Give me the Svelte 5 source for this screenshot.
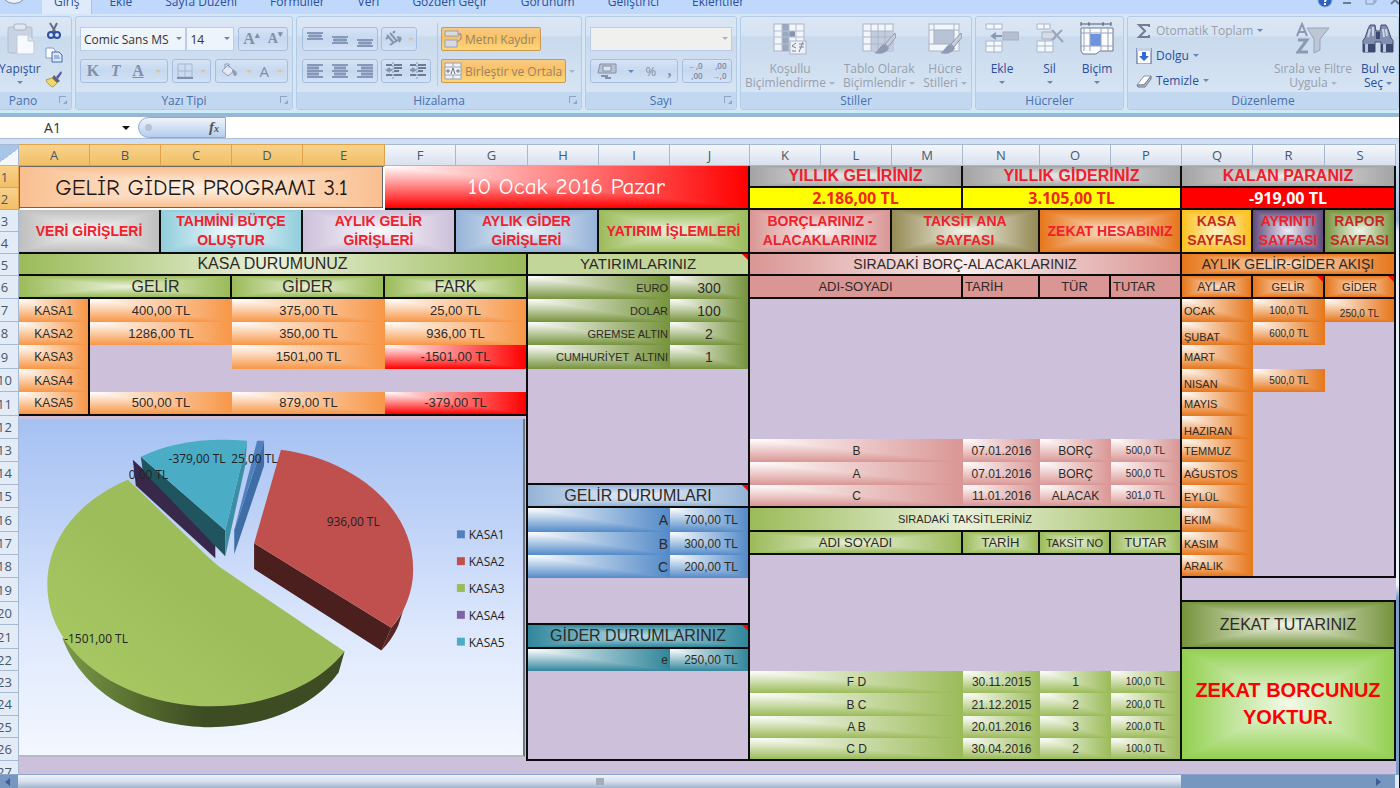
<script>
  const tabs = ['Giriş', 'Ekle', 'Sayfa Düzeni', 'Formüller', 'Veri', 'Gözden Geçir', 'Görünüm', 'Geliştirici', 'Eklentiler']

  const columns = [
    ['A', 71], ['B', 71], ['C', 71], ['D', 71], ['E', 82], ['F', 71], ['G', 72],
    ['H', 71], ['I', 71], ['J', 80], ['K', 71], ['L', 71], ['M', 71], ['N', 77],
    ['O', 71], ['P', 71], ['Q', 71], ['R', 72], ['S', 71]
  ]

  const c = (text, span, cls = '', rows = 1) => ({ text, span, cls, rows })
  const link = (text, span, cls) => ({ text, span, cls: 'menu center right bottom ' + cls, rows: 2, href: '#sayfa' })
  const month = (text, low) => c(text, 1, 'corner amber s11 left' + (low ? ' low' : ''))
  const kasa = (text) => c(text, 1, 'corner orange s12 right')
  const money = (text, span, color = 'orange') => c(text, span, 'corner s13 ' + color)
  const debt = (name, date, kind, sum, extra = '') => [
    c(name, 3, 'corner pink s12 ' + extra),
    c(date, 1, 'corner pink s12 ' + extra),
    c(kind, 1, 'corner pink s12 ' + extra),
    c(sum, 1, 'corner pink s10 right ' + extra)
  ]
  const instalment = (name, date, no, sum, extra = '') => [
    c(name, 3, 'corner green s12 ' + extra),
    c(date, 1, 'corner green s12 ' + extra),
    c(no, 1, 'corner green s12 ' + extra),
    c(sum, 1, 'corner green s10 right ' + extra)
  ]

  const rows = [
    { h: 22, cells: [
      c('GELİR GİDER PROGRAMI 3.1', 5, 'center peach comic selected', 2),
      c('10 Ocak 2016 Pazar', 5, 'corner red comic date right bottom', 2),
      c('YILLIK GELİRİNİZ', 3, 'center gray total right bottom'),
      c('YILLIK GİDERİNİZ', 3, 'center gray total right bottom'),
      c('KALAN PARANIZ', 3, 'center gray total right bottom')
    ] },
    { h: 22, cells: [
      c('2.186,00 TL', 3, 'yellow amount right bottom'),
      c('3.105,00 TL', 3, 'yellow amount right bottom'),
      c('-919,00 TL', 3, 'negative amount right bottom')
    ] },
    { h: 22, cells: [
      link('VERİ GİRİŞLERİ', 2, 'silver'),
      link('TAHMİNİ BÜTÇE OLUŞTUR', 2, 'aqua'),
      link('AYLIK GELİR GİRİŞLERİ', 2, 'lilac'),
      link('AYLIK GİDER GİRİŞLERİ', 2, 'sky'),
      link('YATIRIM İŞLEMLERİ', 2, 'green'),
      link('BORÇLARINIZ - ALACAKLARINIZ', 2, 'pink'),
      link('TAKSİT ANA SAYFASI', 2, 'khaki'),
      link('ZEKAT HESABINIZ', 2, 'amber'),
      link('KASA SAYFASI', 1, 'gold deep'),
      link('AYRINTI SAYFASI', 1, 'violet'),
      link('RAPOR SAYFASI', 1, 'olive deep')
    ] },
    { h: 22, cells: [] },
    { h: 22, cells: [
      c('KASA DURUMUNUZ', 7, 'band green s16 right bottom'),
      c('YATIRIMLARINIZ', 3, 'palegreen s15 right bottom note'),
      c('SIRADAKİ BORÇ-ALACAKLARINIZ', 6, 'band pink s14 right bottom'),
      c('AYLIK GELİR-GİDER AKIŞI', 3, 'center amber s14 right bottom')
    ] },
    { h: 23, cells: [
      c('GELİR', 3, 'center green s16 indent right bottom'),
      c('GİDER', 2, 'center green s16 right bottom'),
      c('FARK', 2, 'center green s16 right bottom'),
      c('EURO', 2, 'corner olive s11 end'),
      c('300', 1, 'corner olive s14 right'),
      c('ADI-SOYADI', 3, 'flatpink s13 right bottom'),
      c('TARİH', 1, 'flatpink s13 left right bottom'),
      c('TÜR', 1, 'flatpink s13 right bottom'),
      c('TUTAR', 1, 'flatpink s13 left right bottom'),
      c('AYLAR', 1, 'center amber s12 right bottom'),
      c('GELİR', 1, 'center amber s11 right bottom note'),
      c('GİDER', 1, 'center amber s11 right bottom note')
    ] },
    { h: 23, cells: [
      kasa('KASA1'), money('400,00 TL', 2), money('375,00 TL', 2), money('25,00 TL', 2, 'orange right'),
      c('DOLAR', 2, 'corner olive s11 end'), c('100', 1, 'corner olive s14 right'),
      c('', 6, 'right', 6),
      month('OCAK'), c('100,0 TL', 1, 'corner amber s10'), c('250,0 TL', 1, 'corner amber s10 right low')
    ] },
    { h: 23, cells: [
      kasa('KASA2'), money('1286,00 TL', 2), money('350,00 TL', 2), money('936,00 TL', 2, 'orange right'),
      c('GREMSE ALTIN', 2, 'corner olive s11 end'), c('2', 1, 'corner olive s14 right'),
      month('ŞUBAT', true), c('600,0 TL', 1, 'corner amber s10'), c('', 1, 'right')
    ] },
    { h: 24, cells: [
      kasa('KASA3'), c('', 2), money('1501,00 TL', 2), money('-1501,00 TL', 2, 'red right'),
      c('CUMHURİYET  ALTINI', 2, 'corner olive s11 end'), c('1', 1, 'corner olive s14 right'),
      month('MART'), c('', 1), c('', 1, 'right')
    ] },
    { h: 23, cells: [
      kasa('KASA4'), c('', 6, 'right'), c('', 3, 'right bottom', 5),
      month('NISAN', true), c('500,0 TL', 1, 'corner amber s10'), c('', 1, 'right')
    ] },
    { h: 24, cells: [
      c('KASA5', 1, 'corner orange s12 right bottom'), money('500,00 TL', 2, 'orange bottom'),
      money('879,00 TL', 2, 'orange bottom'), money('-379,00 TL', 2, 'red right bottom'),
      month('MAYIS'), c('', 2, 'right bottom', 8)
    ] },
    { h: 23, cells: [{ ...c('', 7, 'chartcell right', 15), chart: true }, month('HAZIRAN', true)] },
    { h: 23, cells: [...debt('B', '07.01.2016', 'BORÇ', '500,0 TL'), month('TEMMUZ')] },
    { h: 23, cells: [...debt('A', '07.01.2016', 'BORÇ', '500,0 TL'), month('AĞUSTOS')] },
    { h: 23, cells: [
      c('GELİR DURUMLARI', 3, 'center sky s16 right bottom note'),
      ...debt('C', '11.01.2016', 'ALACAK', '301,0 TL', 'bottom'), month('EYLÜL')
    ] },
    { h: 24, cells: [
      c('A', 2, 'corner blue s14 end'), c('700,00 TL', 1, 'corner blue s12 end inset right'),
      c('SIRADAKİ TAKSİTLERİNİZ', 6, 'band green s11 right bottom'), month('EKIM')
    ] },
    { h: 23, cells: [
      c('B', 2, 'corner blue s14 end'), c('300,00 TL', 1, 'corner blue s12 end inset right'),
      c('ADI SOYADI', 3, 'center green s13 right bottom'), c('TARİH', 1, 'center green s13 right bottom'),
      c('TAKSİT NO', 1, 'center green s11 right bottom'), c('TUTAR', 1, 'center green s13 right bottom'),
      month('KASIM')
    ] },
    { h: 23, cells: [
      c('C', 2, 'corner blue s14 end'), c('200,00 TL', 1, 'corner blue s12 end inset right'),
      c('', 6, 'right', 5), c('ARALIK', 1, 'corner amber s11 left bottom')
    ] },
    { h: 24, cells: [c('', 3, 'right bottom', 2), c('', 3, 'bottom')] },
    { h: 23, cells: [c('ZEKAT TUTARINIZ', 3, 'center olive s16 right bottom', 2)] },
    { h: 24, cells: [c('GİDER DURUMLARINIZ', 3, 'center teal s16 right bottom note')] },
    { h: 22, cells: [
      c('e', 2, 'corner teal s12 end'), c('250,00 TL', 1, 'corner teal s12 end inset right'),
      c('ZEKAT BORCUNUZ YOKTUR.', 3, 'center lime zekat right bottom', 5)
    ] },
    { h: 22, cells: [c('', 3, 'right bottom', 4), ...instalment('F D', '30.11.2015', '1', '100,0 TL')] },
    { h: 23, cells: instalment('B C', '21.12.2015', '2', '200,0 TL') },
    { h: 22, cells: instalment('A B', '20.01.2016', '3', '200,0 TL') },
    { h: 23, cells: instalment('C D', '30.04.2016', '2', '100,0 TL', 'bottom') },
    { h: 23, cells: [c('', 19)] }
  ]

  const legend = [
    ['KASA1', '#4f81bd'], ['KASA2', '#c0504d'], ['KASA3', '#9bbb59'], ['KASA4', '#8064a2'], ['KASA5', '#4bacc6']
  ]
</script>

{#snippet lines(widths, top, anchor)}
  <svg width="18" height="18" viewBox="0 0 18 18">
    <rect x={anchor === 'end' ? 5 : anchor === 'mid' ? 3 : 1} y={top} width="12" height={widths.length * 3 - 1} fill="#a9b9d2" />
    {#each widths as w, i}
      <rect x={anchor === 'end' ? 17 - w : anchor === 'mid' ? 9 - w / 2 : 1} y={top + i * 3} width={w} height="2" fill="#8598ba" />
    {/each}
  </svg>
{/snippet}

{#snippet gridIcon(kind)}
  <svg width="34" height="34" viewBox="0 0 34 34">
    <rect x="1" y="2" width="30" height="27" fill="#f2f5fa" stroke="#aab6c9" />
    {#if kind === 'style'}
      <rect x="6" y="8" width="20" height="14" fill="#b9c3d6" stroke="#a3afc4" />
      <path d="M1 8H6M1 22H6M6 2V8M26 2V8M26 8H31" stroke="#aab6c9" />
    {:else if kind === 'cond'}
      <rect x="9" y="2" width="7" height="27" fill="#9aa7bf" />
      <rect x="16" y="9" width="6" height="6" fill="#8794ae" />
      <path d="M1 9H31M1 15H31M1 22H31M9 2V29M16 2V29M23 2V29" stroke="#b3bed0" />
      <rect x="17" y="19" width="16" height="13" fill="#eef1f6" stroke="#a9b3c5" />
      <path d="M23 21L19 24L23 26M19 29H23M26 22H31M26 25H31M30 20L26 30" stroke="#78849b" fill="none" />
    {:else}
      <rect x="9" y="9" width="22" height="20" fill="#c3ccdc" />
      <path d="M1 9H31M1 15H31M1 22H31M9 2V29M16 2V29M23 2V29" stroke="#aab6c9" />
    {/if}
    {#if kind !== 'cond'}
      <path d="M33 11L23 22L26 25L34 15Z" fill="#c6cedb" stroke="#8f9bb0" />
      <path d="M22 22L27 26C25 31 18 33 12 31C17 29 17 24 22 22Z" fill="#8f9bb3" />
    {/if}
  </svg>
{/snippet}

<div class="app">
  <nav class="tabs">
    <span class="office"></span>
    {#each tabs as tab, i}
      <a href="#sekme" class:active={i === 0}>{tab}</a>
    {/each}
    <span class="window">
      <svg width="16" height="16" viewBox="0 0 16 16"><circle cx="8" cy="8" r="7" fill="#2f62c0" stroke="#8aa6d8" /><path d="M6 6C6 3 10 3 10 6C10 8 8 7 8 10M8 11V13" stroke="#fff" stroke-width="2" fill="none" /></svg>
      <svg width="60" height="16" viewBox="0 0 60 16"><path d="M4 11H12" stroke="#6c7c93" stroke-width="2" /><path d="M29 6V4H37V10H35M27 6H35V12H27Z" stroke="#8a97aa" fill="none" /><path d="M52 4L60 12M60 4L52 12" stroke="#6c7c93" stroke-width="2" /></svg>
    </span>
  </nav>

  <div class="ribbon">
    <section class="group pano">
      <div class="tools">
        <button class="big">
          <svg width="34" height="34" viewBox="0 0 34 34"><rect x="5" y="5" width="24" height="26" rx="2" fill="#c9d3e2" stroke="#b0bccf" /><rect x="11" y="2" width="12" height="6" rx="2" fill="#e2e8f1" stroke="#a9b4c6" /><path d="M14 13H25L31 19V32H14Z" fill="#f6f9fd" stroke="#c0cad9" /><path d="M25 13V19H31" fill="#dce4ef" stroke="#c0cad9" /></svg>
          <span>Yapıştır</span><i></i>
        </button>
        <div class="stack">
          <button aria-label="Kes"><svg width="18" height="18" viewBox="0 0 18 18"><path d="M5 1L11 11M12 1L7 11" stroke="#5f6f86" stroke-width="2" /><circle cx="6" cy="13" r="3" fill="none" stroke="#2d50a0" stroke-width="2" /><circle cx="12" cy="13" r="3" fill="none" stroke="#2d50a0" stroke-width="2" /></svg></button>
          <button aria-label="Kopyala"><svg width="18" height="18" viewBox="0 0 18 18"><path d="M1 2H8L10 4V12H1Z" fill="#fff" stroke="#7f9acb" /><path d="M7 6H14L17 9V16H7Z" fill="#dbe7fa" stroke="#4669ad" /><path d="M9 10H14M9 12H15" stroke="#5f83c7" /></svg></button>
          <button aria-label="Biçim Boyacısı"><svg width="18" height="18" viewBox="0 0 18 18"><path d="M16 1L11 7L13 9L17 3Z" fill="#5b5f9d" /><path d="M9 5L15 11L12 13L7 8Z" fill="#59618e" /><path d="M7 8L12 13L8 17C5 16 2 13 1 10Z" fill="#f1d767" stroke="#b79a3c" /></svg></button>
        </div>
      </div>
      <h2>Pano<b></b></h2>
    </section>

    <section class="group font">
      <div class="tools col">
        <div class="line">
          <span class="combo name"><select aria-label="Yazı tipi"><option>Comic Sans MS</option></select></span>
          <span class="combo size"><select aria-label="Yazı boyutu"><option>14</option></select></span>
          <span class="set w50"><button class="serif a1">A<sup>▴</sup></button><button class="serif a2">A<sup>▾</sup></button></span>
        </div>
        <div class="line">
          <span class="set w90"><button class="serif bold">K</button><button class="serif italic">T</button><button class="serif under">A</button><i></i></span>
          <span class="set w40"><button aria-label="Kenarlık"><svg width="16" height="16" viewBox="0 0 16 16"><path d="M1 1H15V14H1ZM8 1V14M1 8H15" stroke="#a9b6cb" fill="none" /><path d="M0 15H16" stroke="#7f90ac" stroke-width="2" /></svg></button><i></i></span>
          <span class="set w74"><button aria-label="Dolgu rengi"><svg width="18" height="18" viewBox="0 0 18 18"><path d="M8 3L14 9L8 14L2 9Z" fill="#e4e9f1" stroke="#8f9db5" /><path d="M5 6V2H9V6" fill="none" stroke="#8f9db5" /><path d="M14 8C17 10 17 13 15 14C13 13 14 10 12 9Z" fill="#8f9db5" stroke="#8f9db5" /></svg></button><i></i><button class="plain">A</button><i></i></span>
        </div>
      </div>
      <h2>Yazı Tipi<b></b></h2>
    </section>

    <section class="group align">
      <div class="tools">
        <div class="col">
          <div class="line">
            <span class="set w75">
              <button aria-label="Üste hizala">{@render lines([16, 14, 16], 2, 'mid')}</button>
              <button aria-label="Ortala">{@render lines([16, 14, 16], 6, 'mid')}</button>
              <button aria-label="Alta hizala">{@render lines([16, 14, 16], 9, 'mid')}</button>
            </span>
            <span class="set w36"><button aria-label="Yönlendirme"><svg width="18" height="18" viewBox="0 0 18 18"><path d="M2 5L8 12M5 3L11 10M1 9L4 6M8 3L10 1M5 15L16 8M16 8L12 7M16 8L14 12" stroke="#8795ad" stroke-width="2" fill="none" /></svg></button><i></i></span>
          </div>
          <div class="line">
            <span class="set w75">
              <button aria-label="Sola hizala">{@render lines([16, 12, 16, 12, 16], 2, 'start')}</button>
              <button aria-label="Yatay ortala">{@render lines([16, 12, 16, 12, 16], 2, 'mid')}</button>
              <button aria-label="Sağa hizala">{@render lines([16, 12, 16, 12, 16], 2, 'end')}</button>
            </span>
            <span class="set w50">
              <button aria-label="Girintiyi azalt"><svg width="18" height="18" viewBox="0 0 18 18"><path d="M1 3H7M9 3H17M9 6H17M9 9H14M1 13H7M9 13H17" stroke="#6d7b97" stroke-width="2" /><path d="M8 0V18" stroke="#8795ad" stroke-dasharray="2 1" /><path d="M5 6L2 8L5 10M2 8H7" stroke="#8795ad" fill="none" stroke-width="2" /></svg></button>
              <button aria-label="Girintiyi artır"><svg width="18" height="18" viewBox="0 0 18 18"><path d="M1 3H7M9 3H17M9 6H17M9 9H14M1 13H7M9 13H17" stroke="#6d7b97" stroke-width="2" /><path d="M8 0V18" stroke="#8795ad" stroke-dasharray="2 1" /><path d="M3 6L6 8L3 10M1 8H6" stroke="#8795ad" fill="none" stroke-width="2" /></svg></button>
            </span>
          </div>
        </div>
        <div class="col split">
          <button class="hot wrap"><svg width="18" height="18" viewBox="0 0 18 18"><rect x="1" y="1" width="13" height="5" fill="#d6dae2" stroke="#98a2b3" /><rect x="1" y="10" width="12" height="7" fill="#d6dae2" stroke="#98a2b3" /><path d="M14 4H17V9L13 12" fill="none" stroke="#7b89a3" /></svg>Metni Kaydır</button>
          <div class="line"><button class="hot merge"><svg width="18" height="18" viewBox="0 0 18 18"><rect x="1" y="1" width="16" height="16" fill="#f0f2f6" stroke="#98a2b3" /><path d="M1 5H17M1 13H17M9 1V5M9 13V17" stroke="#98a2b3" /><path d="M2 9H6M12 9H16M4 7V11M14 7V11M7 12L9 6L11 12" stroke="#67758f" fill="none" /></svg>Birleştir ve Ortala</button><i></i></div>
        </div>
      </div>
      <h2>Hizalama<b></b></h2>
    </section>

    <section class="group number">
      <div class="tools col">
        <span class="combo format"><select aria-label="Sayı biçimi"><option></option></select></span>
        <div class="line">
          <span class="set w90"><button aria-label="Para birimi"><svg width="20" height="18" viewBox="0 0 20 18"><path d="M3 2H19V11H1Z" fill="#b8c2d2" stroke="#8492a9" /><rect x="6" y="4" width="8" height="5" fill="#dde3ec" stroke="#8492a9" /><path d="M4 14H11M8 16H14" stroke="#8492a9" stroke-width="2" /></svg></button><i class="dark"></i><button class="plain pct">%</button><button class="serif bold">,</button></span>
          <span class="set w50 decimals"><button>←,0<br />,00</button><button>,00<br />→,0</button></span>
        </div>
      </div>
      <h2>Sayı<b></b></h2>
    </section>

    <section class="group styles">
      <div class="tools">
        <button class="big off">{@render gridIcon('cond')}<span>Koşullu</span><span>Biçimlendirme <i></i></span></button>
        <button class="big off">{@render gridIcon('table')}<span>Tablo Olarak</span><span>Biçimlendir <i></i></span></button>
        <button class="big off">{@render gridIcon('style')}<span>Hücre</span><span>Stilleri <i></i></span></button>
      </div>
      <h2>Stiller</h2>
    </section>

    <section class="group cells">
      <div class="tools">
        <button class="big"><svg width="34" height="34" viewBox="0 0 34 34"><path d="M1 2H17V7H1ZM9 2V7M1 19H17V30H1ZM9 19V30M1 24H17" fill="#f5f8fc" stroke="#aab6c9" /><rect x="18" y="10" width="16" height="8" fill="#b5bfd0" stroke="#a3afc2" /><path d="M17 14H7M11 11L7 14L11 17" stroke="#8797b3" stroke-width="2" fill="none" /></svg><span>Ekle</span><i></i></button>
        <button class="big"><svg width="34" height="34" viewBox="0 0 34 34"><path d="M4 2H17V7H4ZM11 2V7M4 19H20V30H4ZM12 19V30M4 24H20" fill="#f5f8fc" stroke="#aab6c9" /><path d="M9 10H22V17H9Z" fill="#d5dce7" stroke="#a3afc2" /><path d="M19 8L30 20M29 8L19 18" stroke="#9aa6ba" stroke-width="2" /></svg><span>Sil</span><i></i></button>
        <button class="big"><svg width="34" height="34" viewBox="0 0 34 34"><path d="M1 2H31M1 0V4M9 0V4M23 0V4M31 0V4" stroke="#4d596e" /><path d="M1 6H33V29H20L16 32H3L1 29Z" fill="#fbfcfe" stroke="#6d7a90" /><rect x="10" y="12" width="11" height="12" fill="#6f94df" /><path d="M1 11H33M1 24H33M10 6V29M21 6V29M28 6V29M4 6V29" stroke="#98a4b8" /></svg><span>Biçim</span><i></i></button>
      </div>
      <h2>Hücreler</h2>
    </section>

    <section class="group edit">
      <div class="tools">
        <div class="stack wide">
          <button class="off"><svg width="16" height="16" viewBox="0 0 16 16"><path d="M13 4V2H3L9 8L3 14H13V12" stroke="#6f7d95" stroke-width="2" fill="none" /></svg>Otomatik Toplam <i class="dark"></i></button>
          <button><svg width="16" height="16" viewBox="0 0 16 16"><rect x="1" y="0" width="14" height="16" fill="#fff" stroke="#4a5f8f" /><rect x="1" y="0" width="14" height="3" fill="#c5d2ea" /><path d="M6 4H10V8H13L8 13L3 8H6Z" fill="#3568d4" /></svg>Dolgu <i class="dark"></i></button>
          <button><svg width="16" height="16" viewBox="0 0 16 16"><path d="M8 3H15L8 12H1Z" fill="#fdfdfe" stroke="#8a94a6" /><path d="M1 12H8L15 3V6L9 14H2Z" fill="#b9c2d2" stroke="#6e7a90" /></svg>Temizle <i class="dark"></i></button>
        </div>
        <button class="big off"><svg width="34" height="34" viewBox="0 0 34 34"><path d="M1 14L6 2L11 14M3 10H9" stroke="#8b99b2" stroke-width="2" fill="none" /><path d="M2 18H11L2 30H12" stroke="#8b99b2" stroke-width="3" fill="none" /><path d="M11 6H33L24 17V28L18 31V17Z" fill="#bcc6d5" stroke="#98a5ba" /></svg><span>Sırala ve Filtre</span><span>Uygula <i></i></span></button>
        <button class="big"><svg width="34" height="34" viewBox="0 0 34 34"><path d="M9 3H14L15 9H19L20 3H25L27 7L30 16Q33 18 32 22V30H20V20H14V30H2V22Q1 18 4 16L7 7Z" fill="#8190b0" stroke="#45526f" /><path d="M2 22H14V30H2ZM20 22H32V30H20Z" fill="#3c4a72" /><path d="M4 22H7V30H4ZM22 22H25V30H22Z" fill="#b9c5de" /><path d="M9 7L7 15M22 7L23 15M12 5V14M25 7L26 14" stroke="#cdd6e7" stroke-width="2" /><path d="M15 10H19V17H15Z" fill="#3c4a72" /></svg><span>Bul ve</span><span>Seç <i class="dark"></i></span></button>
      </div>
      <h2>Düzenleme</h2>
    </section>
  </div>

  <div class="formula">
    <input class="namebox" aria-label="Ad kutusu" value="A1" />
    <i class="drop"></i>
    <div class="fx"><span></span><button aria-label="İşlev ekle"><em>f</em><small>x</small></button></div>
    <input class="entry" aria-label="Formül çubuğu" />
  </div>

  <div class="work">
    <div class="sheet">
      <table>
        <colgroup>
          <col class="rowcol" />
          {#each columns as [name, width] (name)}
            <col style:width="{width}px" />
          {/each}
        </colgroup>
        <thead>
          <tr>
            <th class="corner-all"></th>
            {#each columns as [name], i (name)}
              <th class:hot-head={i < 5}>{name}</th>
            {/each}
          </tr>
        </thead>
        <tbody>
          {#each rows as row, r}
            <tr style:height="{row.h}px">
              <th class:hot-head={r < 2}>{r + 1}</th>
              {#each row.cells as cell}
                <td class={cell.cls} colspan={cell.span} rowspan={cell.rows}>
                  {#if cell.chart}
                    <div class="chart">
                      <svg viewBox="0 0 506 338" role="img" aria-label="Kasa farkları">
                        <defs>
                          <linearGradient id="side" x1="0" x2="1">
                            <stop offset="0" stop-color="#7d9a49" />
                            <stop offset="0.3" stop-color="#52682c" />
                            <stop offset="0.5" stop-color="#3e4c24" />
                          </linearGradient>
                          <linearGradient id="top" x1="0" y1="1" x2="1" y2="0">
                            <stop offset="0" stop-color="#abcb66" />
                            <stop offset="0.5" stop-color="#9dbd5b" />
                          </linearGradient>
                        </defs>
                        <path d="M114 41L197 117V140L117 67Z" fill="#38294a" />
                        <path d="M122 38L207 112V138L124 52Z" fill="#20545f" />
                        <path d="M229 22L207 112V138L227 47Z" fill="#3a8fa5" />
                        <path d="M122 38C150 24 188 18 229 22L207 112Z" fill="#4bacc6" />
                        <path d="M246 22V47L216 136V112Z" fill="#3f6da6" />
                        <path d="M239 22H246L216 112Z" fill="#4f81bd" />
                        <path d="M236 125L374 210L364 233L236 151Z" fill="#4a1f1e" />
                        <path d="M374 210C380 203 384 197 387 189L381 208C377 217 371 226 364 233Z" fill="#5b2524" />
                        <path d="M263 31C334 40 397 88 396 152C396 175 387 195 374 210L236 125Z" fill="#c0504d" />
                        <path d="M43 220C65 280 130 310 192 310C245 310 296 290 321 255L327 234L192 270Z" fill="url(#side)" />
                        <path d="M109 61C60 82 28 120 28 167C28 240 110 289 192 289C250 289 300 268 327 234L200 148L190 139Z" fill="url(#top)" />
                        <text x="150" y="44">-379,00 TL</text>
                        <text x="213" y="44">25,00 TL</text>
                        <text x="110" y="60">0,00 TL</text>
                        <text x="309" y="108">936,00 TL</text>
                        <text x="45" y="225">-1501,00 TL</text>
                        {#each legend as [name, color], i}
                          <rect x="440" y={112 + i * 27} width="8" height="8" fill={color} />
                          <text x="452" y={121 + i * 27}>{name}</text>
                        {/each}
                      </svg>
                    </div>
                  {:else if cell.href}
                    <a href={cell.href}>{cell.text}</a>
                  {:else}
                    {cell.text}
                  {/if}
                </td>
              {/each}
            </tr>
          {/each}
        </tbody>
      </table>
    </div>
    <div class="vscroll"></div>
  </div>

  <div class="hscroll">
    <span class="arrow back"></span>
    <span class="thumb"><b></b></span>
    <span class="track"><span class="arrow next"></span></span>
  </div>
</div>

<style>
  :global(body) {
    margin: 0;
    overflow: hidden;
  }

  .app {
    display: flex;
    flex-direction: column;
    height: 100vh;
    box-sizing: border-box;
    overflow: hidden;
    background: #d0e0f4;
    border-right: 1px solid #111;
    font-family: 'Open Sans', 'Segoe UI', sans-serif;
    font-size: 12px;
    color: #2b4f9c;
  }

  button {
    padding: 0;
    border: 0;
    background: none;
    font: inherit;
    color: inherit;
  }

  svg {
    display: block;
    flex: none;
  }

  i {
    display: inline-block;
    flex: none;
    border: 3px solid transparent;
    border-top-color: #a9b3c2;
    border-bottom: 0;
    vertical-align: middle;
  }

  /* tabs */
  .tabs {
    display: flex;
    align-items: flex-end;
    gap: 1px;
    height: 14px;
    flex: none;
    overflow: hidden;
    background: #bfd8fb;
    line-height: 18px;
  }

  .office {
    width: 28px;
    height: 40px;
    margin-right: 13px;
    margin-bottom: 10px;
    border-radius: 0 0 18px 18px;
    background: #eef3fa;
    border: 1px solid #7f93b3;
    box-sizing: border-box;
  }

  .tabs a {
    padding: 0 16px 3px;
    color: #2b4f9c;
    text-decoration: none;
    white-space: nowrap;
  }

  .tabs .active {
    padding: 0 12px 3px;
    background: #dfeafa;
    border-right: 1px solid #a9c4e8;
  }

  .window {
    display: flex;
    gap: 6px;
    margin-left: auto;
    padding-bottom: 6px;
  }

  /* ribbon */
  .ribbon {
    display: flex;
    gap: 3px;
    flex: none;
    height: 99px;
    box-sizing: border-box;
    margin-left: -12px;
    padding: 2px 0 2px;
    background: #d5e7f7;
    border-bottom: 1px solid #c3effa;
  }

  .group {
    display: flex;
    flex-direction: column;
    flex: none;
    box-sizing: border-box;
    border: 1px solid #b4cbe6;
    border-radius: 3px;
    background: linear-gradient(#dbe6f4, #d6e3f2 20%, #c9daed 22%, #dae7f5);
  }

  .group h2 {
    position: relative;
    margin: 0;
    height: 17px;
    font-size: 12px;
    font-weight: 400;
    line-height: 17px;
    text-align: center;
    color: #4a70ae;
    background: #c1d8f0;
  }

  .group h2 b {
    position: absolute;
    right: 5px;
    top: 4px;
    width: 6px;
    height: 6px;
    border-left: 1px solid #8ea6c6;
    border-top: 1px solid #8ea6c6;
  }

  .group h2 b::after {
    content: '';
    position: absolute;
    right: -1px;
    bottom: -1px;
    border: 2px solid #8ea6c6;
    border-left-color: transparent;
    border-top-color: transparent;
  }

  .tools {
    display: flex;
    flex: 1;
    min-height: 0;
    padding: 0 4px;
  }

  .pano { width: 84px; }
  .font { width: 218px; }
  .align { width: 286px; }
  .number { width: 152px; }
  .styles { width: 232px; }
  .cells { width: 149px; }
  .edit { flex: 1; min-width: 240px; }

  .pano h2 { padding-right: 14px; }

  .col {
    display: flex;
    flex-direction: column;
    gap: 8px;
    padding-top: 10px;
  }

  .line {
    display: flex;
    align-items: center;
    gap: 4px;
  }

  .align .tools { padding-left: 5px; }
  .align .line { gap: 3px; }

  .split {
    margin: 6px 0 6px 6px;
    padding-top: 4px;
    padding-left: 3px;
    border-left: 1px solid #b4c8e0;
    align-items: flex-start;
  }

  .set {
    display: flex;
    align-items: center;
    justify-content: space-around;
    height: 24px;
    box-sizing: border-box;
    border: 1px solid #a5bfe0;
    border-radius: 3px;
    background: linear-gradient(#d6e3f4, #c6d9f0 50%, #d3e1f3);
  }

  .set i { border-top-color: #d3c6a6; }
  i.dark, .set i.dark { border-top-color: #6a86b3; }

  .w36 { width: 36px; }
  .w40 { width: 39px; }
  .w50 { width: 50px; }
  .w74 { width: 74px; }
  .w75 { width: 76px; }
  .w90 { width: 89px; }

  .serif {
    font-family: 'Liberation Serif', serif;
    font-size: 16px;
    font-weight: 700;
    line-height: 20px;
    color: #8190a8;
  }

  .serif sup {
    font-size: 9px;
    line-height: 8px;
  }

  .a2 { font-size: 14px; }
  .italic { font-style: italic; }
  .under { text-decoration: underline; }
  .plain { font-size: 15px; color: #8190a8; }
  .pct { font-size: 13px; }

  .decimals button {
    font-size: 8px;
    font-weight: 600;
    line-height: 10px;
    color: #7787a2;
    text-align: right;
  }

  .combo {
    position: relative;
    display: flex;
    height: 24px;
  }

  .combo::after {
    content: '';
    position: absolute;
    right: 4px;
    top: 10px;
    border: 3px solid transparent;
    border-top-color: #6a86b3;
    border-bottom: 0;
  }

  .combo select {
    appearance: none;
    width: 100%;
    height: 24px;
    margin: 0;
    padding: 0 3px;
    border: 1px solid #b9cde8;
    border-radius: 0;
    background: #eef4fc;
    font: inherit;
    color: #333;
  }

  .name { width: 107px; }
  .size { width: 48px; margin-left: -4px; }
  .format { width: 142px; }
  .format select { background: #f0f0ee; }
  .format::after { border-top-color: #a9b3c2; }

  .hot {
    display: flex;
    align-items: center;
    gap: 3px;
    height: 24px;
    box-sizing: border-box;
    padding: 0 2px;
    border: 1px solid #c79a52;
    border-radius: 2px;
    background: linear-gradient(#f7cb85, #fbc065 45%, #fdd777);
    color: #958569;
    white-space: nowrap;
  }

  .wrap { width: 100px; }
  .merge { width: 125px; }

  .big {
    display: flex;
    flex-direction: column;
    align-items: center;
    padding-top: 5px;
    line-height: 14px;
    white-space: nowrap;
  }

  .big > span:first-of-type { margin-top: 6px; }
  .big > i { margin-top: 5px; border-top-color: #6a86b3; }
  .off { color: #98a0ab; }

  .pano .tools { gap: 4px; padding-left: 10px; }

  .stack {
    display: flex;
    flex-direction: column;
    gap: 6px;
    padding-top: 5px;
  }

  .stack.wide { gap: 8px; }

  .wide button {
    display: flex;
    align-items: center;
    gap: 4px;
    height: 17px;
    white-space: nowrap;
  }

  .styles .tools { justify-content: space-between; }
  .cells .tools { justify-content: space-between; padding: 0 9px; }
  .edit .tools { justify-content: space-between; padding-left: 8px; padding-right: 3px; }
  .edit .stack { margin-right: auto; }
  .edit .big:last-child { margin-left: 9px; }

  /* formula bar */
  .formula {
    display: flex;
    align-items: center;
    flex: none;
    height: 21px;
    padding-right: 4px;
    border-top: 4px solid #9bb5d3;
    border-bottom: 1px solid #a9bed8;
    margin-bottom: 5px;
    background: #fff;
  }

  .formula input {
    height: 20px;
    padding: 0;
    border: 0;
    outline: 0;
    background: #fff;
    font: inherit;
    font-size: 14px;
    color: #333;
  }

  .namebox { width: 105px; text-align: center; }
  .formula .drop { margin: 0 8px 0 17px; border-width: 4px 4px 0; border-top-color: #111; }

  .fx {
    display: flex;
    justify-content: space-between;
    align-items: center;
    width: 88px;
    height: 21px;
    box-sizing: border-box;
    padding: 0 6px;
    border: 1px solid #8fa9cd;
    border-radius: 11px 0 0 11px;
    background: linear-gradient(#eef4fc, #b5cdec);
  }

  .fx span { width: 7px; height: 7px; border-radius: 4px; background: #b9c2d0; }
  .fx button { font-family: 'Liberation Serif', serif; font-size: 15px; font-weight: 700; line-height: 16px; color: #555; }
  .fx small { font-size: 10px; font-style: italic; }
  .entry { flex: 1; }

  /* sheet */
  .work {
    display: flex;
    flex: 1;
    min-height: 0;
  }

  .sheet {
    flex: 1;
    overflow: hidden;
    background: #ccc0da;
  }

  .vscroll {
    width: 3px;
    background: linear-gradient(#dfe9f6, #9fb9dc 12%, #e6eef9 14%, #eef3fa 70%, #7f9fca 72%);
  }

  table {
    width: calc(100% + 9px);
    margin-left: -9px;
    table-layout: fixed;
    border-collapse: separate;
    border-spacing: 0;
  }

  .rowcol { width: 28px; }
  thead tr { height: 22px; }

  th {
    padding: 0;
    box-sizing: border-box;
    border-right: 1px solid #a5b9d3;
    border-bottom: 1px solid #a5b9d3;
    background: #e3ebf6;
    font-size: 13px;
    font-weight: 400;
    line-height: 18px;
    color: #47586b;
  }

  thead th {
    border-top: 1px solid #a5b9d3;
    background: linear-gradient(#f4f7fc, #d9e1ee);
  }

  .hot-head, thead .hot-head {
    background: linear-gradient(#f8d28c, #f1bf66);
    border-color: #e2a24a;
  }

  thead .corner-all {
    background: linear-gradient(to bottom right, transparent 60%, #f4f7fc 60%), #a9c4e9;
  }

  td {
    position: relative;
    padding: 0;
    box-sizing: border-box;
    overflow: hidden;
    background-color: #ccc0da;
    font-family: 'Liberation Sans', Arial, sans-serif;
    font-size: 13px;
    line-height: 18px;
    text-align: center;
    white-space: pre;
    color: #2d2a28;
  }

  td.right { border-right: 2px solid #0c0c0c; }
  td.bottom { border-bottom: 2px solid #0c0c0c; }

  /* gradient fills: from the corner, from the middle, across */
  td.corner {
    background: linear-gradient(to right, #fff, var(--c)), linear-gradient(#fff, var(--c));
    background-blend-mode: darken;
  }

  td.center {
    background: linear-gradient(to right, var(--c), var(--l, #fff), var(--c)), linear-gradient(var(--c), var(--l, #fff), var(--c));
    background-blend-mode: darken;
  }

  td.band { background: linear-gradient(to right, var(--c), var(--l, #fff), var(--c)); }

  .orange { --c: #f79646; }
  .peach { --c: #f9bf8f; --l: #fff3e9; }
  .amber { --c: #e6761a; --l: #fbe0ca; }
  .red { --c: #ff0000; }
  .green { --c: #9bbb59; --l: #e9f1da; }
  .olive { --c: #76933c; --l: #f2f6ea; }
  .gray { --c: #a3a3a3; --l: #ededed; }
  .silver { --c: #bfbfbf; --l: #f7f7f7; }
  .aqua { --c: #92cddc; --l: #f3fafc; }
  .lilac { --c: #ccc0da; --l: #faf8fc; }
  .sky { --c: #95b3d7; --l: #eaf1f9; }
  .blue { --c: #538ac8; }
  .pink { --c: #d99694; --l: #faeeee; }
  .khaki { --c: #948a54; --l: #f5f3ea; }
  .gold { --c: #fcc01c; --l: #fff1c4; }
  .violet { --c: #60497a; --l: #efecf3; }
  .teal { --c: #31869b; --l: #b7dee8; }
  .lime { --c: #92d050; --l: #f3faea; }

  td.palegreen { background: #c2d69a; }
  td.flatpink { background: #d99694; }
  td.yellow { background: #ffff00; color: #f0281e; }
  td.negative { background: #ff0000; color: #fff; }

  .s10 { font-size: 10px; }
  .s11 { font-size: 11px; }
  .s12 { font-size: 12px; }
  .s14 { font-size: 14px; }
  .s15 { font-size: 15px; }
  .s16 { font-size: 16px; }

  td.left { text-align: left; padding-left: 2px; }
  td.end { text-align: right; padding-right: 2px; }
  td.inset { padding-right: 10px; }
  td.low { vertical-align: bottom; line-height: 16px; }
  td.indent { padding-left: 62px; }

  td.comic {
    font-family: 'Comic Sans MS', 'Comic Neue', 'Open Sans', sans-serif;
    font-size: 23px;
    line-height: 28px;
    color: #1b1613;
  }

  td.date { color: #fff; }

  td.selected {
    border: 1px solid #6f6a66;
    border-right: 2px solid #fff;
    border-bottom: 2px solid #fff;
    box-shadow: inset -1px -1px #666;
  }

  td.total {
    font-size: 16px;
    font-weight: 700;
    color: #f0202c;
  }

  td.amount {
    font-family: 'Open Sans', sans-serif;
    font-size: 16px;
    font-weight: 700;
    line-height: 18px;
  }

  .menu a {
    display: block;
    padding: 0 4px;
    font-size: 14px;
    font-weight: 700;
    line-height: 19px;
    white-space: normal;
    text-decoration: none;
    color: #f0202c;
  }

  .deep a { color: #c4291f; }

  td.zekat {
    font-size: 20px;
    font-weight: 700;
    line-height: 27px;
    white-space: normal;
    color: #ff0000;
  }

  .note::after {
    content: '';
    position: absolute;
    top: 0;
    right: 0;
    border: 3px solid #f00;
    border-left-color: transparent;
    border-bottom-color: transparent;
  }

  .chart {
    position: absolute;
    inset: 3px 1px 4px 0;
    border-right: 2px solid #6e7584;
    border-bottom: 2px solid #b4b9c4;
    background: linear-gradient(#a5c1f2, #c3d5f8 35%, #dfe9fd 65%, #f3f7fe);
  }

  .chart svg { width: 100%; height: 100%; }

  .chart text {
    font-family: 'Open Sans', sans-serif;
    font-size: 12px;
    fill: #222;
  }

  /* scroll bar under the sheet */
  .hscroll {
    display: flex;
    flex: none;
    height: 14px;
    background: #7796c0;
    border-top: 1px solid #8ba5cf;
    box-sizing: border-box;
  }

  .arrow {
    width: 18px;
    height: 13px;
    position: relative;
  }

  .arrow::after {
    content: '';
    position: absolute;
    top: 3px;
    left: 5px;
    border: 4px solid transparent;
    border-left-width: 0;
    border-right: 5px solid #3f5f94;
  }

  .next::after {
    border: 4px solid transparent;
    border-right-width: 0;
    border-left: 5px solid #3f5f94;
  }

  .thumb {
    display: flex;
    justify-content: center;
    align-items: center;
    flex: 1;
    background: linear-gradient(#f0f4fa, #d7dfeb 50%, #9fb5d1);
  }

  .thumb b { width: 8px; height: 7px; background: #a7adb6; }

  .track {
    display: flex;
    justify-content: flex-end;
    width: 218px;
    padding-right: 6px;
    box-sizing: border-box;
    border-right: 4px solid #dfe8f5;
  }
</style>
